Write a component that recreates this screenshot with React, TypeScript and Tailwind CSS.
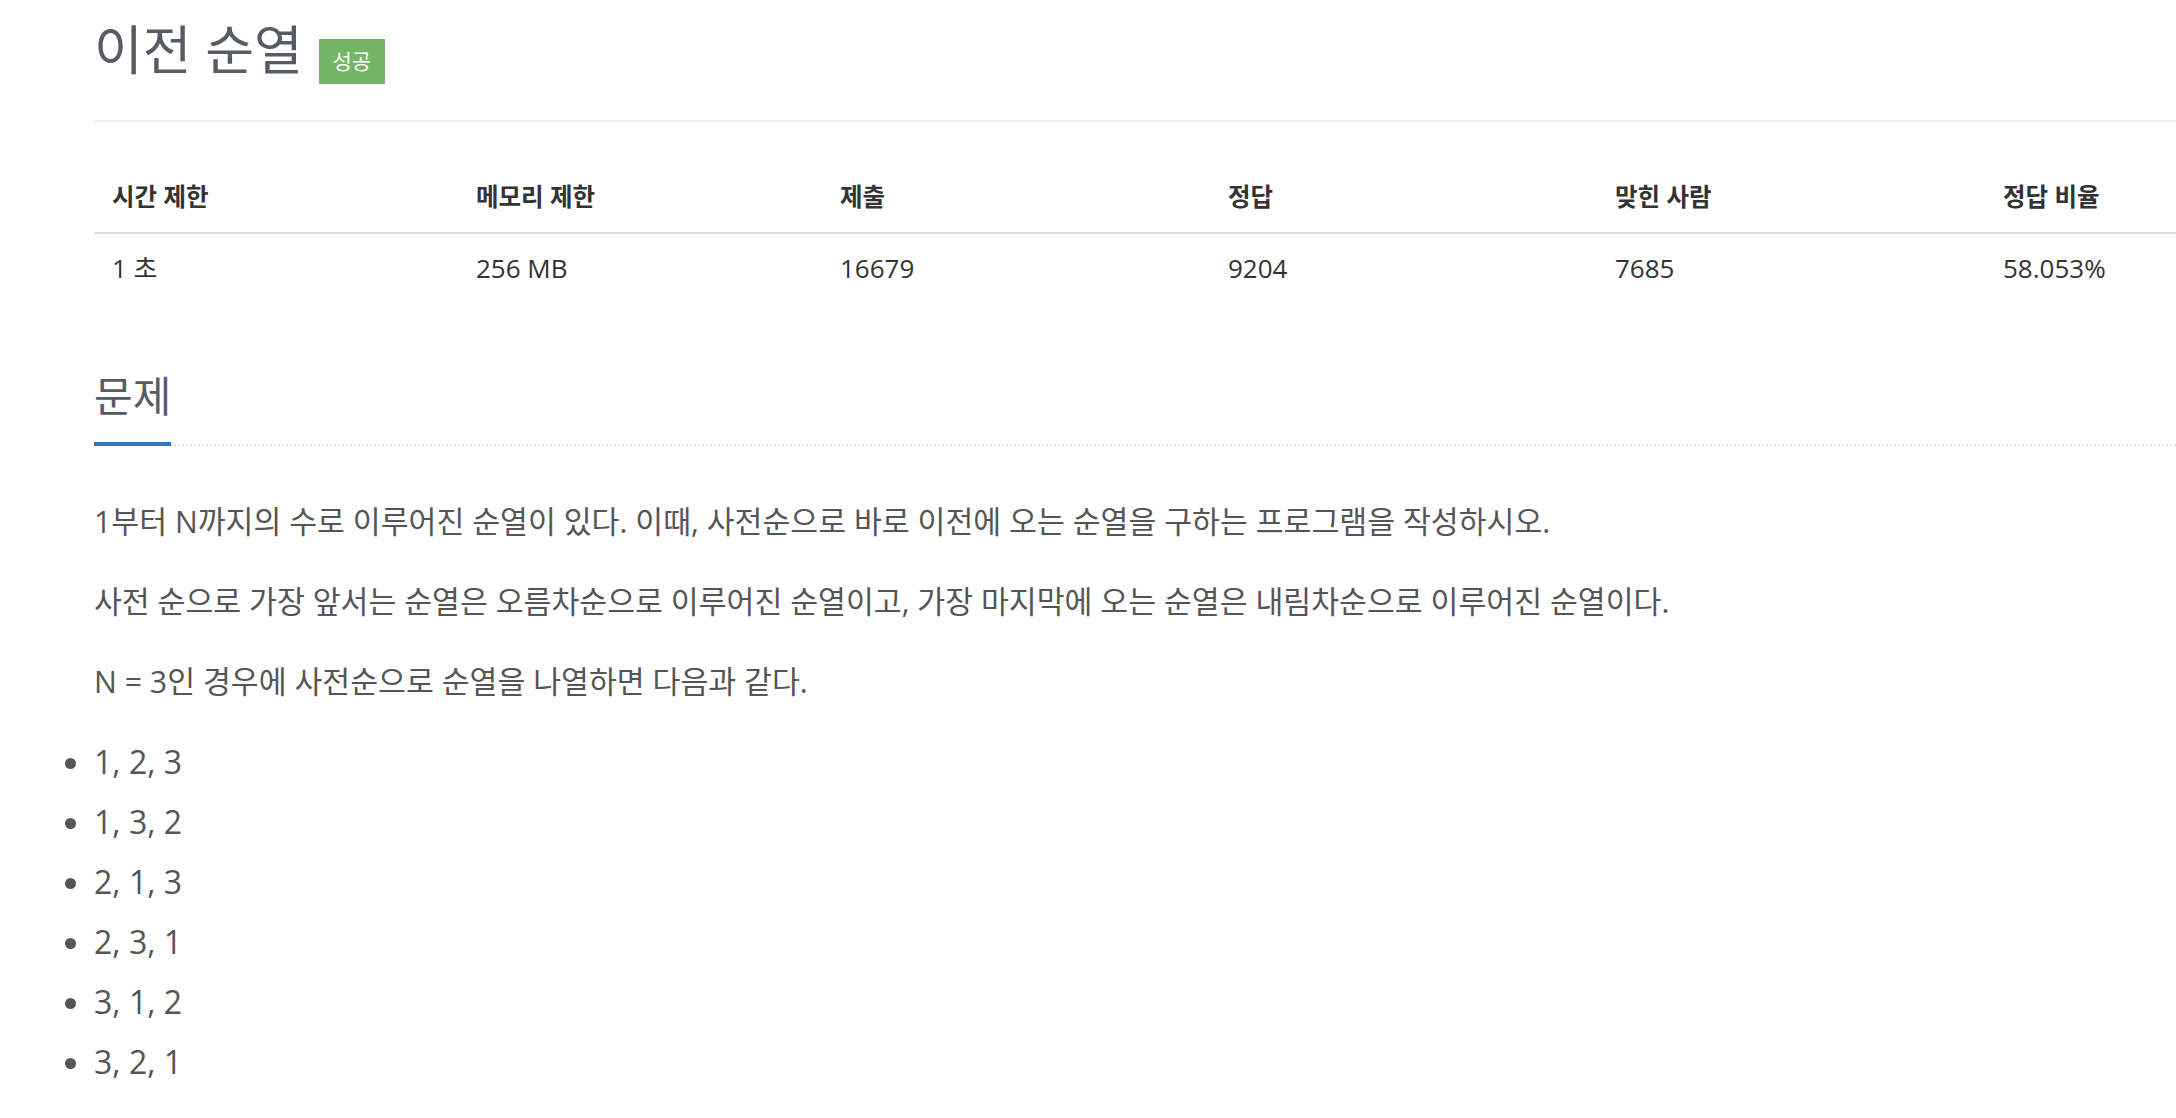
import React from "react";

const stats = [
  { label: "시간 제한", value: "1 초", w: "w-[364px]" },
  { label: "메모리 제한", value: "256 MB", w: "w-[364px]" },
  { label: "제출", value: "16679", w: "w-[388px]" },
  { label: "정답", value: "9204", w: "w-[387px]" },
  { label: "맞힌 사람", value: "7685", w: "w-[388px]" },
  { label: "정답 비율", value: "58.053%", w: "" },
];

const perms = ["1, 2, 3", "1, 3, 2", "2, 1, 3", "2, 3, 1", "3, 1, 2", "3, 2, 1"];

const App = () => {
  return (
    <div
      className="min-h-screen bg-white pl-[94px] overflow-hidden"
      style={{ fontFamily: '"Open Sans", "Noto Sans CJK KR", sans-serif' }}
    >
      {/* 문제 제목 */}
      <div className="flex items-start h-[122px] border-b-2 border-[#eeeeee]">
        <h1 className="mt-[25px] text-[53px] leading-[50px] text-[#555c66]">이전 순열</h1>
        <span className="ml-[16px] mt-[39px] w-[66px] h-[45px] flex items-center justify-center bg-[#74b566] text-white text-[21px]">
          성공
        </span>
      </div>

      {/* 제한 / 통계 */}
      <table className="mt-[41px] w-full border-collapse text-[#333333]">
        <thead>
          <tr className="border-b-2 border-[#dddddd]">
            {stats.map((s) => (
              <th key={s.label} className={`${s.w} h-[70px] pl-[18px] text-left align-middle text-[24.5px] font-bold`}>
                {s.label}
              </th>
            ))}
          </tr>
        </thead>
        <tbody>
          <tr>
            {stats.map((s) => (
              <td key={s.label} className="h-[70px] pl-[18px] align-middle text-[26px]">
                {s.value}
              </td>
            ))}
          </tr>
        </tbody>
      </table>

      {/* 문제 */}
      <div className="mt-[68px] flex border-b-2 border-dotted border-[#dddddd]">
        <h2 className="pb-[21px] -mb-[2px] border-b-4 border-[#3275c0] text-[42px] leading-[50px] text-[#555c66]">
          문제
        </h2>
      </div>

      <div className="mt-[56px] text-[30.3px] leading-[40px] text-[#555555]">
        <p className="mb-[40px]">
          1부터 N까지의 수로 이루어진 순열이 있다. 이때, 사전순으로 바로 이전에 오는 순열을 구하는 프로그램을 작성하시오.
        </p>
        <p className="mb-[40px]">
          사전 순으로 가장 앞서는 순열은 오름차순으로 이루어진 순열이고, 가장 마지막에 오는 순열은 내림차순으로 이루어진 순열이다.
        </p>
        <p className="mb-[40px]">N = 3인 경우에 사전순으로 순열을 나열하면 다음과 같다.</p>
        <ul className="list-disc list-outside text-[32px]">
          {perms.map((p) => (
            <li key={p} className="mb-[20px] leading-[40px]">
              {p}
            </li>
          ))}
        </ul>
      </div>
    </div>
  );
};

export default App;
